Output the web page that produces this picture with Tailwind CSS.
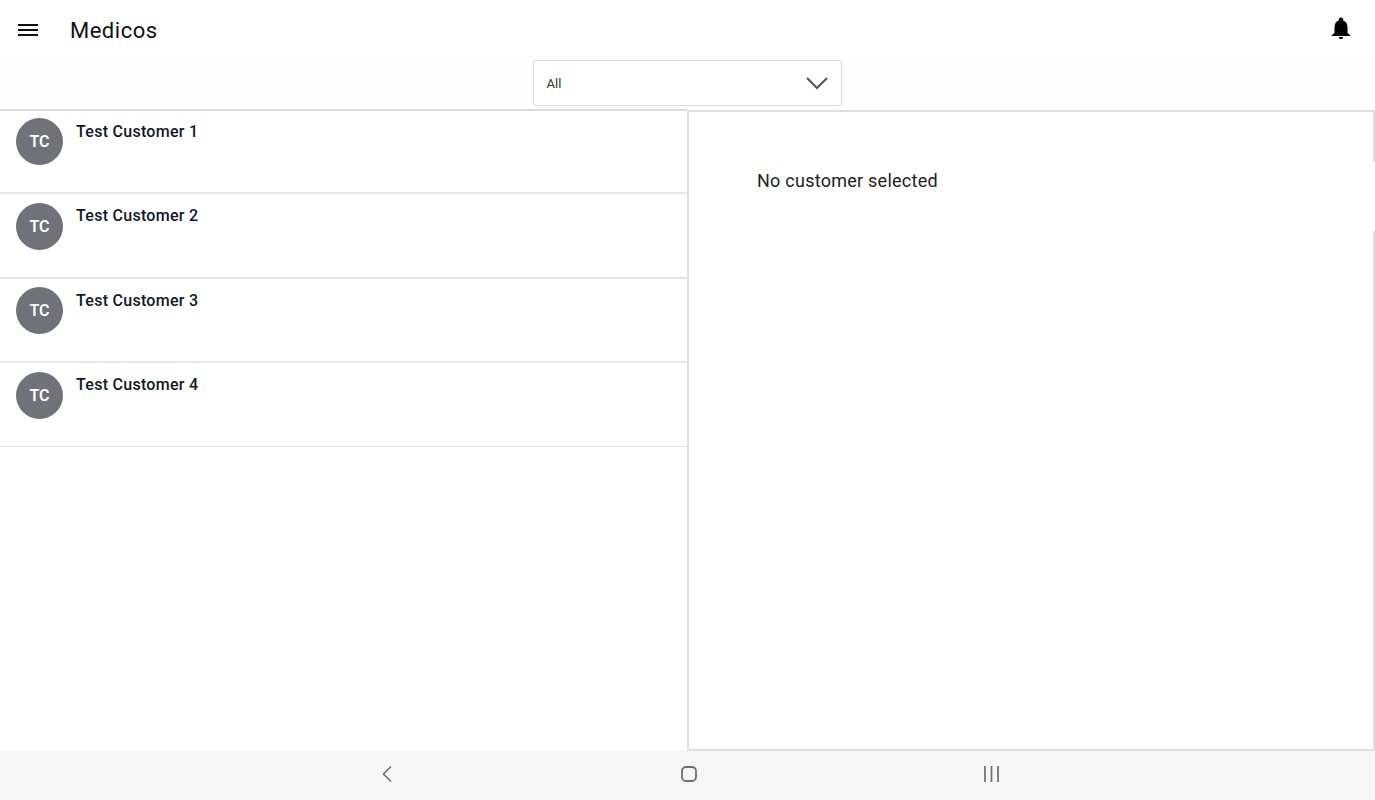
<!DOCTYPE html>
<html>
<head>
<meta charset="utf-8">
<script src="https://cdn.jsdelivr.net/npm/@tailwindcss/browser@4"></script>
</head>
<body class="bg-white font-['Roboto',sans-serif] overflow-hidden">
<div class="w-[1375px] h-[800px] flex flex-col">
  <header class="h-[56px] shrink-0 flex items-center pl-[18px] pr-[23px] bg-white">
    <svg class="w-[20px] h-[16px] shrink-0 relative top-[2px]" viewBox="0 0 20 16" fill="none" stroke="#111" stroke-width="2"><path d="M0 3h20M0 8h20M0 13h20"/></svg>
    <div class="ml-[32px] text-[22px] leading-[28px] text-[#111] tracking-[0.5px] relative top-[3px]">Medicos</div>
    <svg class="ml-auto w-[22px] h-[22px]" viewBox="0 0 22 22" fill="#000"><path d="M11 22c1.300 0 2.200-.9 2.200-2.100H8.800C8.800 21.100 9.700 22 11 22zM17.500 15.800v-5.300c0-3.500-1.200-6.300-4.300-7.100v-.8C13.200 1.400 12.200.5 11 .5S8.800 1.400 8.800 2.600v.8C5.700 4.200 4.500 7 4.500 10.500v5.300L1.500 18.600v.4h19v-.4l-3-2.800z"/></svg>
  </header>
  <div class="h-[53px] shrink-0 flex justify-center items-start pt-[4px] bg-[#fefefe] pr-[1px]">
    <div class="w-[309px] h-[46px] bg-white border border-[#dcdcdc] rounded-[3px] flex items-center justify-between pl-[13px] pr-[13px] relative z-10">
      <span class="text-[13px] text-[#333] relative top-[1px]">All</span>
      <svg class="w-[22px] h-[14px]" viewBox="0 0 22 14" fill="none" stroke="#555" stroke-width="2"><path d="M1 2l10 10L21 2"/></svg>
    </div>
  </div>
  <main class="flex-1 flex min-h-0">
    <section class="w-[687px] shrink-0 border-t-2 border-[#dcdcdc]">
      <div class="h-[83px] border-b-2 border-[#e8e8e8] flex pt-[7px] pl-[16px] gap-[13px]">
        <div class="w-[47px] h-[47px] rounded-full bg-[#71717a] text-white flex items-center justify-center text-[16px] font-semibold">TC</div>
        <div class="text-[16px] font-medium leading-[24px] text-[#111827] tracking-[0.28px] relative top-[2px]">Test Customer 1</div>
      </div>
      <div class="h-[85px] border-b-2 border-[#e4e4e4] flex pt-[9px] pl-[16px] gap-[13px]">
        <div class="w-[47px] h-[47px] rounded-full bg-[#71717a] text-white flex items-center justify-center text-[16px] font-semibold">TC</div>
        <div class="text-[16px] font-medium leading-[24px] text-[#111827] tracking-[0.28px] relative top-[1px]">Test Customer 2</div>
      </div>
      <div class="h-[84px] border-b-2 border-[#e8e8e8] flex pt-[8px] pl-[16px] gap-[13px]">
        <div class="w-[47px] h-[47px] rounded-full bg-[#71717a] text-white flex items-center justify-center text-[16px] font-semibold">TC</div>
        <div class="text-[16px] font-medium leading-[24px] text-[#111827] tracking-[0.28px] relative top-[2px]">Test Customer 3</div>
      </div>
      <div class="h-[84px] border-b border-[#e2e2e2] flex pt-[9px] pl-[16px] gap-[13px]">
        <div class="w-[47px] h-[47px] rounded-full bg-[#71717a] text-white flex items-center justify-center text-[16px] font-semibold">TC</div>
        <div class="text-[16px] font-medium leading-[24px] text-[#111827] tracking-[0.28px] relative top-[1px]">Test Customer 4</div>
      </div>
    </section>
    <section class="flex-1 mt-px border-t-2 border-l-2 border-r-2 border-b-2 border-[#e0e0e0] pt-[50px]">
      <div class="h-[69px] -mr-[2px] bg-white pl-[68px] pt-[7px] text-[18px] leading-[24px] text-[#222] tracking-[0.25px]">No customer selected</div>
    </section>
  </main>
  <nav class="h-[49px] shrink-0 bg-[#f6f6f6] relative flex items-center">
    <svg class="absolute left-[381px] top-[14px] w-[12px] h-[18px]" viewBox="0 0 12 18" fill="none" stroke="#6e6e6e" stroke-width="1.600"><path d="M10 1.500L2.500 9l7.500 7.500"/></svg>
    <svg class="absolute left-[680px] top-[14px] w-[18px] h-[18px]" viewBox="0 0 18 18" fill="none" stroke="#6e6e6e" stroke-width="1.800"><rect x="2" y="2" width="14" height="14" rx="4"/></svg>
    <svg class="absolute left-[983px] top-[15px] w-[17px] h-[16px]" viewBox="0 0 17 16" fill="none" stroke="#6e6e6e" stroke-width="1.700"><path d="M2 0v16M8.500 0v16M15 0v16"/></svg>
  </nav>
</div>
</body>
</html>
